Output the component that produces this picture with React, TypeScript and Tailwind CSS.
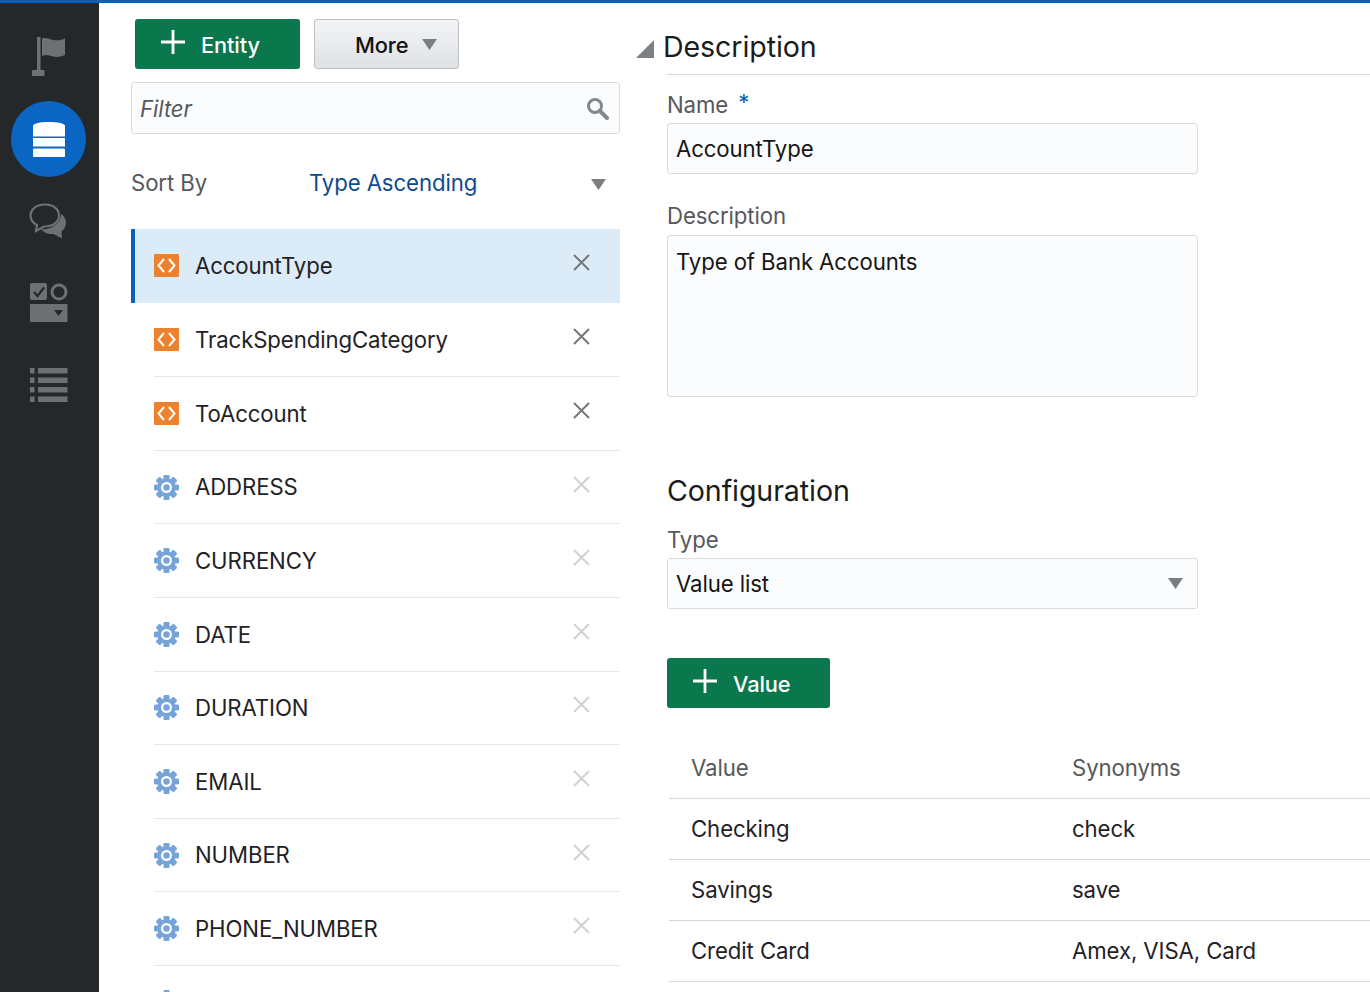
import React from "react";

const Flag = () => (
  <svg width="34" height="40" viewBox="0 0 34 40" fill="#6e7173" className="ml-[1px]">
    <rect x="5" y="0" width="3.500" height="33" />
    <rect x="0" y="33" width="12.500" height="6" rx="1" />
    <path d="M10 1.500c4-1.600 7 .5 11 1.500 4 .8 8 .3 12-1.500V18c-4 2-8 2.500-12 1.500-4-1.200-7-2.500-11-.5V1.500z" />
  </svg>
);
const Chat = () => (
  <svg width="38" height="36" viewBox="0 0 38 36" className="-ml-[1px]">
    <path d="M16 1.500C8 1.500 1.500 6 1.500 12.500c0 4 2.500 7.500 6.500 9.500l-1 6 8-4.500h1c8 0 14-4.500 14-11S24 1.500 16 1.500z" fill="none" stroke="#6e7173" strokeWidth="2.200" />
    <path d="M32 11c3.500 2 5 5.500 5 9 0 3.500-2 6.500-4.500 8.500l.5 7-8.500-4.500c-3 .3-6-.2-8.500-1.500l-4-3c8 0 14-3 17.500-8 1.500-2.500 2.500-5 2.500-7.500z" fill="#6e7173" />
  </svg>
);
const Widgets = () => (
  <svg width="38" height="39" viewBox="0 0 38 39">
    <rect x="0" y="0" width="17" height="17" rx="2" fill="#6e7173" />
    <path d="M4 9l3.500 4L14 4.500" fill="none" stroke="#25282b" strokeWidth="2.200" />
    <circle cx="29" cy="9" r="7" fill="none" stroke="#6e7173" strokeWidth="3" />
    <rect x="0" y="21" width="37.500" height="18" rx="1" fill="#6e7173" />
    <path d="M24 27h9l-4.500 6z" fill="#25282b" />
  </svg>
);
const ListIcon = () => (
  <svg width="38" height="35" viewBox="0 0 38 35" fill="#6e7173">
    {[0, 9.5, 19, 28.5].map((y) => (
      <g key={y}>
        <rect x="0" y={y} width="4.500" height="5.500" />
        <rect x="8" y={y} width="29.500" height="5.500" />
      </g>
    ))}
  </svg>
);
const Db = () => (
  <svg width="32" height="35" viewBox="0 0 32 35" fill="#fff">
    <path d="M0 4c0-2.500 7-4 16-4s16 1.500 16 4v10.500H0z" />
    <rect y="16" width="32" height="8.500" />
    <rect y="26.500" width="32" height="8.500" rx="1" />
  </svg>
);
const Plus = () => (
  <svg width="26" height="26" viewBox="0 0 26 26" stroke="#fff" strokeWidth="2.800" className="-mt-[5px] shrink-0">
    <path d="M13 1v24M1 13h24" />
  </svg>
);
const Caret = ({ c = "#7b7e80" }: { c?: string }) => (
  <svg width="15" height="11" viewBox="0 0 15 11" className="shrink-0">
    <path d="M0 0h15l-7.500 11z" fill={c} />
  </svg>
);
const Search = () => (
  <svg width="23" height="23" viewBox="0 0 23 23" fill="none" stroke="#84888b">
    <circle cx="9" cy="9" r="6.500" strokeWidth="3" />
    <path d="M14 14l7 7" strokeWidth="4" strokeLinecap="round" />
  </svg>
);
const Code = () => (
  <span className="flex h-[23px] w-[25px] shrink-0 items-center justify-center rounded-[1px] bg-[#ec8230]">
    <svg width="19" height="15" viewBox="0 0 19 15" fill="none" stroke="#fff" strokeWidth="2">
      <path d="M7 1L1.500 7.500 7 14M12 1l5.500 6.500L12 14" />
    </svg>
  </span>
);
const Gear = () => (
  <svg width="25" height="25" viewBox="0 0 25 25" className="shrink-0">
    <g fill="#76a3da">
      {[0, 45, 90, 135, 180, 225, 270, 315].map((a) => (
        <rect key={a} x="9.700" y="0" width="5.600" height="25" rx="1.200" transform={`rotate(${a} 12.500 12.500)`} />
      ))}
      <circle cx="12.500" cy="12.500" r="9.200" />
    </g>
    <circle cx="12.500" cy="12.500" r="5.500" fill="#fff" />
    <circle cx="12.500" cy="12.500" r="3.200" fill="#76a3da" />
  </svg>
);
const Close = ({ dim }: { dim: boolean }) => (
  <svg width="17" height="17" viewBox="0 0 17 17" stroke={dim ? "#cfd1d2" : "#75787a"} strokeWidth="2" className="shrink-0">
    <path d="M1 1l15 15M16 1L1 16" />
  </svg>
);

const entities = [
  ["AccountType", 1],
  ["TrackSpendingCategory", 1],
  ["ToAccount", 1],
  ["ADDRESS", 0],
  ["CURRENCY", 0],
  ["DATE", 0],
  ["DURATION", 0],
  ["EMAIL", 0],
  ["NUMBER", 0],
  ["PHONE_NUMBER", 0],
] as const;

const rows = [
  ["Checking", "check"],
  ["Savings", "save"],
  ["Credit Card", "Amex, VISA, Card"],
];

const fieldCls = "rounded-[3px] border border-[#d9dde0] bg-[#fbfcfe] px-[8px] text-[#161513]";

export default function App() {
  return (
    <div className="flex h-[992px] overflow-hidden border-t-[3px] border-[#0a5fb8] bg-white font-['Inter','Noto_Sans',sans-serif] text-[22.200px] tracking-[-0.1px] text-[#1f2125]">
      <aside className="flex w-[99px] shrink-0 flex-col items-center bg-[#25282b] pr-[2px]">
        <div className="mt-[34px] h-[40px]"><Flag /></div>
        <div className="mt-[24px] flex h-[76px] w-[75px] items-center justify-center rounded-full bg-[#0a66c2]"><Db /></div>
        <div className="mt-[26px] h-[36px]"><Chat /></div>
        <div className="mt-[44px] h-[39px]"><Widgets /></div>
        <div className="mt-[46px]"><ListIcon /></div>
      </aside>

      <section className="ml-[32px] w-[489px] shrink-0">
        <div className="ml-[4px] mt-[16px] flex gap-[14px]">
          <button className="flex h-[50px] w-[165px] items-center rounded-[3px] bg-[#0a774d] pl-[25px] text-[21.800px] font-medium text-white">
            <Plus />
            <span className="ml-[15px] mt-[2px]">Entity</span>
          </button>
          <button className="flex h-[50px] w-[145px] items-center rounded-[3px] border border-[#bcc0c4] bg-gradient-to-b from-[#f2f3f5] to-[#dfe2e5] pl-[40px] text-[21.800px] font-medium text-[#101114]">
            <span className="mt-[2px]">More</span>
            <span className="ml-[14px] mt-[1px]"><Caret /></span>
          </button>
        </div>
        <div className={`mt-[13px] flex h-[52px] items-center justify-between ${fieldCls} pr-[10px]`}>
          <span className="mt-[2px] italic text-[#56585b]">Filter</span>
          <Search />
        </div>
        <div className="mt-[32px] flex h-[34px] items-center">
          <span className="w-[178px] text-[#56585b]">Sort By</span>
          <span className="flex-1 text-[#0e4a8f]">Type Ascending</span>
          <span className="mr-[14px] mt-[2px]"><Caret /></span>
        </div>
        <ul className="mt-[29px]">
          {entities.map(([name, custom], i) => (
            <li key={name} className={`flex h-[73.600px] items-center ${i === 0 ? "mb-[1px] border-l-[4px] border-[#0a5fb8] bg-[#dcebf8] pl-[19px]" : "pl-[23px]"}`}>
              <div className={`flex h-full flex-1 items-center pr-[30px] ${i > 0 ? "border-b border-[#e6e7e8]" : ""}`}>
                <div className="flex w-[25px] justify-center">{custom ? <Code /> : <Gear />}</div>
                <span className="ml-[16px] flex-1">{name}</span>
                <span className="-mt-[6px]"><Close dim={!custom} /></span>
              </div>
            </li>
          ))}
          <li className="pl-[23px] pt-[24px]"><Gear /></li>
        </ul>
      </section>

      <main className="ml-[16px] flex-1">
        <div className="mt-[26px] flex items-center">
          <svg width="18" height="18" viewBox="0 0 18 18" className="mt-[4px] shrink-0"><path d="M18 0v18H0z" fill="#7d8082" /></svg>
          <h2 className="ml-[9px] text-[28.600px] leading-[36px] text-[#1a1c20]">Description</h2>
        </div>
        <div className="ml-[31px]">
          <div className="mt-[9px] border-t border-[#d4d6d8] pt-[13px]">
            <label className="flex h-[31px] items-start text-[#56585b]">
              Name <span className="ml-[10px] -mt-[2px] text-[#0a5fb8]">*</span>
            </label>
          </div>
          <div className={`mt-[4px] flex h-[51px] w-[531px] items-center ${fieldCls}`}>AccountType</div>
          <label className="mt-[25px] block h-[36px] text-[#56585b]">Description</label>
          <div className={`h-[162px] w-[531px] pt-[9px] ${fieldCls}`}>Type of Bank Accounts</div>
          <h2 className="mt-[75px] text-[28.600px] leading-[38px] text-[#1a1c20]">Configuration</h2>
          <label className="mt-[13px] block h-[35px] text-[#56585b]">Type</label>
          <div className={`flex h-[51px] w-[531px] items-center justify-between pr-[14px] ${fieldCls}`}>
            Value list <Caret />
          </div>
          <button className="mt-[49px] flex h-[50px] w-[163px] items-center rounded-[3px] bg-[#0a774d] pl-[25px] text-[21.800px] font-medium text-white">
            <Plus />
            <span className="ml-[15px] mt-[2px]">Value</span>
          </button>
          <div className="ml-[2px] mt-[30px]">
            <div className="flex h-[61px] items-center border-b border-[#d4d6d8] pl-[22px] text-[#56585b]">
              <span className="w-[381px]">Value</span><span>Synonyms</span>
            </div>
            {rows.map(([a, b]) => (
              <div key={a} className="flex h-[61px] items-center border-b border-[#d4d6d8] pl-[22px]">
                <span className="w-[381px]">{a}</span><span>{b}</span>
              </div>
            ))}
          </div>
        </div>
      </main>
    </div>
  );
}
